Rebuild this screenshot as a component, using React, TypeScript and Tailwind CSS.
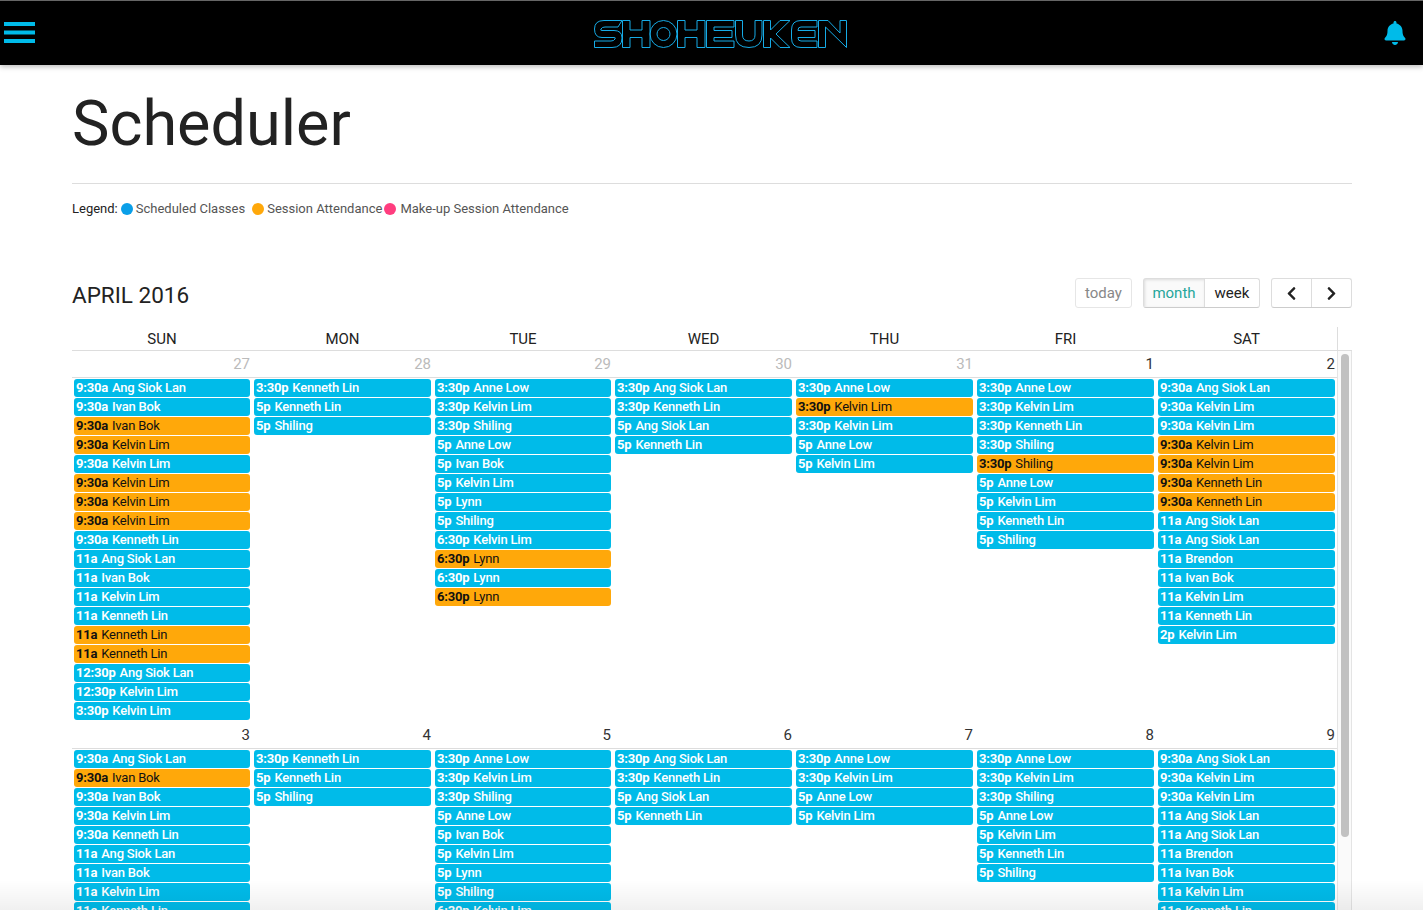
import { FaBell, FaChevronLeft, FaChevronRight } from "react-icons/fa"

// "time|name" and a trailing "|o" marks a session attendance (orange) event
const weeks = [
	{
		days: [
			{ n: 27, muted: true, events: ["9:30a|Ang Siok Lan", "9:30a|Ivan Bok", "9:30a|Ivan Bok|o", "9:30a|Kelvin Lim|o", "9:30a|Kelvin Lim", "9:30a|Kelvin Lim|o", "9:30a|Kelvin Lim|o", "9:30a|Kelvin Lim|o", "9:30a|Kenneth Lin", "11a|Ang Siok Lan", "11a|Ivan Bok", "11a|Kelvin Lim", "11a|Kenneth Lin", "11a|Kenneth Lin|o", "11a|Kenneth Lin|o", "12:30p|Ang Siok Lan", "12:30p|Kelvin Lim", "3:30p|Kelvin Lim"] },
			{ n: 28, muted: true, events: ["3:30p|Kenneth Lin", "5p|Kenneth Lin", "5p|Shiling"] },
			{ n: 29, muted: true, events: ["3:30p|Anne Low", "3:30p|Kelvin Lim", "3:30p|Shiling", "5p|Anne Low", "5p|Ivan Bok", "5p|Kelvin Lim", "5p|Lynn", "5p|Shiling", "6:30p|Kelvin Lim", "6:30p|Lynn|o", "6:30p|Lynn", "6:30p|Lynn|o"] },
			{ n: 30, muted: true, events: ["3:30p|Ang Siok Lan", "3:30p|Kenneth Lin", "5p|Ang Siok Lan", "5p|Kenneth Lin"] },
			{ n: 31, muted: true, events: ["3:30p|Anne Low", "3:30p|Kelvin Lim|o", "3:30p|Kelvin Lim", "5p|Anne Low", "5p|Kelvin Lim"] },
			{ n: 1, events: ["3:30p|Anne Low", "3:30p|Kelvin Lim", "3:30p|Kenneth Lin", "3:30p|Shiling", "3:30p|Shiling|o", "5p|Anne Low", "5p|Kelvin Lim", "5p|Kenneth Lin", "5p|Shiling"] },
			{ n: 2, events: ["9:30a|Ang Siok Lan", "9:30a|Kelvin Lim", "9:30a|Kelvin Lim", "9:30a|Kelvin Lim|o", "9:30a|Kelvin Lim|o", "9:30a|Kenneth Lin|o", "9:30a|Kenneth Lin|o", "11a|Ang Siok Lan", "11a|Ang Siok Lan", "11a|Brendon", "11a|Ivan Bok", "11a|Kelvin Lim", "11a|Kenneth Lin", "2p|Kelvin Lim"] },
		],
	},
	{
		days: [
			{ n: 3, events: ["9:30a|Ang Siok Lan", "9:30a|Ivan Bok|o", "9:30a|Ivan Bok", "9:30a|Kelvin Lim", "9:30a|Kenneth Lin", "11a|Ang Siok Lan", "11a|Ivan Bok", "11a|Kelvin Lim", "11a|Kenneth Lin"] },
			{ n: 4, events: ["3:30p|Kenneth Lin", "5p|Kenneth Lin", "5p|Shiling"] },
			{ n: 5, events: ["3:30p|Anne Low", "3:30p|Kelvin Lim", "3:30p|Shiling", "5p|Anne Low", "5p|Ivan Bok", "5p|Kelvin Lim", "5p|Lynn", "5p|Shiling", "6:30p|Kelvin Lim"] },
			{ n: 6, events: ["3:30p|Ang Siok Lan", "3:30p|Kenneth Lin", "5p|Ang Siok Lan", "5p|Kenneth Lin"] },
			{ n: 7, events: ["3:30p|Anne Low", "3:30p|Kelvin Lim", "5p|Anne Low", "5p|Kelvin Lim"] },
			{ n: 8, events: ["3:30p|Anne Low", "3:30p|Kelvin Lim", "3:30p|Shiling", "5p|Anne Low", "5p|Kelvin Lim", "5p|Kenneth Lin", "5p|Shiling"] },
			{ n: 9, events: ["9:30a|Ang Siok Lan", "9:30a|Kelvin Lim", "9:30a|Kelvin Lim", "11a|Ang Siok Lan", "11a|Ang Siok Lan", "11a|Brendon", "11a|Ivan Bok", "11a|Kelvin Lim", "11a|Kenneth Lin"] },
		],
	},
]

const dayNames = ["SUN", "MON", "TUE", "WED", "THU", "FRI", "SAT"]

const Logo = () => (
	<svg width="253" height="28" viewBox="0 0 253 28" fill="none" stroke="#16abe6" strokeWidth="1" className="ml-[23px] mt-[2px] overflow-visible">
		<path d="M28 .5H10Q.5 .5 .5 9Q.5 17.5 8 17.5H20Q22 17.5 21 19Q20 21 17 21H.5V27.5H18Q28 27.5 28 18Q28 10.5 20 10.5H8Q6 10.5 7 9Q8 7 11 7H24Z" />
		<path d="M28.5 .5H36V10H48V.5H56V27.5H48V17.5H36V27.5H28.5Z" />
		<circle cx="69.5" cy="14" r="13.5" />
		<circle cx="69.5" cy="14" r="6.5" />
		<path d="M83.5 .5H91V10H103V.5H111V27.5H103V17.5H91V27.5H83.5Z" />
		<path d="M112.5 .5H140V7H120V10.5H138V17.5H120V21H140V27.5H112.5Z" />
		<path d="M141.5 .5H148.5V15Q148.5 21 155 21Q161 21 161 15V.5H168V15Q168 27.5 155 27.5Q141.5 27.5 141.5 15Z" />
		<path d="M169.5 .5H176.5V10L186 .5H196L182 14L196 27.5H186L176.5 18V27.5H169.5Z" />
		<path d="M223 .5H207Q197.5 .5 197.5 10V18Q197.5 27.5 207 27.5H223V21H207Q204 21 204 18V17.5H221V10.5H204V10Q204 7 207 7H223Z" />
		<path d="M224.5 27.5V.5H234L246 13V.5H252.5V27.5L231.5 7V27.5Z" />
	</svg>
)

const Event = ({ value }: { value: string }) => {
	const [time, name, flag] = value.split("|")
	return (
		<div className={`h-[18px] ml-[2px] mr-[2px] mb-[1px] rounded-[3px] px-[2px] text-[13px] leading-[18px] tracking-[-0.2px] whitespace-nowrap overflow-hidden ${flag ? "bg-[#ffa80a] text-[#111]" : "bg-[#00bbe9] text-white font-medium"}`}>
			<span className="font-bold mr-[4px]">{time}</span>
			{name}
		</div>
	)
}

const App = () => {
	return (
		<div className="relative h-screen overflow-hidden bg-white font-['Roboto',sans-serif] text-[#222]">
			{/* Navbar */}
			<header className="h-[65px] bg-black border-t border-t-[#666] shadow-[0_2px_5px_rgba(0,0,0,0.26)] flex items-center justify-between pl-[4px] pr-[16px]">
				<svg width="31" height="22" viewBox="0 0 31 22" fill="#00bbe9">
					<rect y="0" width="31" height="4" />
					<rect y="8.5" width="31" height="4" />
					<rect y="17" width="31" height="4" />
				</svg>
				<Logo />
				<FaBell size={24} color="#00bbe9" />
			</header>

			<main className="pl-[72px] pr-[71px]">
				<h1 className="text-[63px] leading-[75px] font-normal mt-[21px] pb-[22px] border-b border-b-[#ddd]">Scheduler</h1>

				{/* Legend */}
				<div className="flex items-center text-[13px] leading-[18px] text-[#555] mt-[16px]">
					<span className="text-[#222] mr-[3px]">Legend:</span>
					<span className="w-[12px] h-[12px] rounded-full bg-[#0a9fe8] mr-[3px]"></span>
					<span className="mr-[7px]">Scheduled Classes</span>
					<span className="w-[12px] h-[12px] rounded-full bg-[#ffa80a] mr-[3px]"></span>
					<span className="mr-[2px]">Session Attendance</span>
					<span className="w-[12px] h-[12px] rounded-full bg-[#ff3d7f] mr-[4px]"></span>
					<span>Make-up Session Attendance</span>
				</div>

				{/* Toolbar */}
				<div className="flex items-start justify-between mt-[60px] h-[31px]">
					<h2 className="text-[22.5px] leading-[31px] pt-[2px]">APRIL 2016</h2>
					<div className="flex text-[15px] leading-[28px]">
						<button className="w-[57px] h-[30px] rounded-[3px] border border-[#e6e6e6] text-[#888]">today</button>
						<div className="flex ml-[11px] rounded-[3px] border border-[#ddd] border-b-[#ccc] h-[30px]">
							<button className="w-[61px] text-[#26a69a] bg-[#fafafa] border-r border-r-[#ddd] shadow-[inset_1px_1px_3px_rgba(0,0,0,0.12)]">month</button>
							<button className="w-[54px]">week</button>
						</div>
						<div className="flex ml-[11px] rounded-[3px] border border-[#ddd] border-b-[#ccc] h-[30px]">
							<button className="w-[40px] flex items-center justify-center border-r border-r-[#ddd]"><FaChevronLeft size={15} /></button>
							<button className="w-[39px] flex items-center justify-center"><FaChevronRight size={15} /></button>
						</div>
					</div>
				</div>

				{/* Calendar */}
				<div className="mt-[18px]">
					<div className="flex h-[24px] border-b border-b-[#ddd]">
						<div className="w-[1265px] grid grid-cols-[180px_181px_180px_181px_181px_181px_181px] text-[15px] leading-[24px] text-center">
							{dayNames.map((d) => <div key={d}>{d}</div>)}
						</div>
						<div className="border-l border-l-[#ddd]"></div>
					</div>
					<div className="flex">
						<div className="w-[1265px] shrink-0">
							{weeks.map((week) => (
								<div key={week.days[0].n} className="pb-[1px]">
									<div className="grid grid-cols-[180px_181px_180px_181px_181px_181px_181px] h-[27px] border-b border-b-[#ddd] mb-[1px]">
										{week.days.map((day) => (
											<div key={day.n} className={`text-right pr-[2px] text-[15px] leading-[26px] ${day.muted ? "text-[#bbb]" : "text-[#333]"}`}>{day.n}</div>
										))}
									</div>
									<div className="grid grid-cols-[180px_181px_180px_181px_181px_181px_181px]">
										{week.days.map((day) => (
											<div key={day.n}>
												{day.events.map((e, i) => <Event key={i} value={e} />)}
											</div>
										))}
									</div>
								</div>
							))}
						</div>
						{/* Scrollbar */}
						<div className="w-[15px] border-x border-x-[#e4e4e4] bg-[#fafafa] pl-[3px] pt-[3px]">
							<div className="w-[8px] h-[483px] rounded-[4px] bg-[#c1c1c1]"></div>
						</div>
					</div>
				</div>
			</main>

			{/* Fade at the bottom edge */}
			<div className="absolute bottom-0 left-0 right-0 h-[30px] pointer-events-none bg-gradient-to-b from-transparent to-black/[.06]"></div>
		</div>
	)
}

export default App
